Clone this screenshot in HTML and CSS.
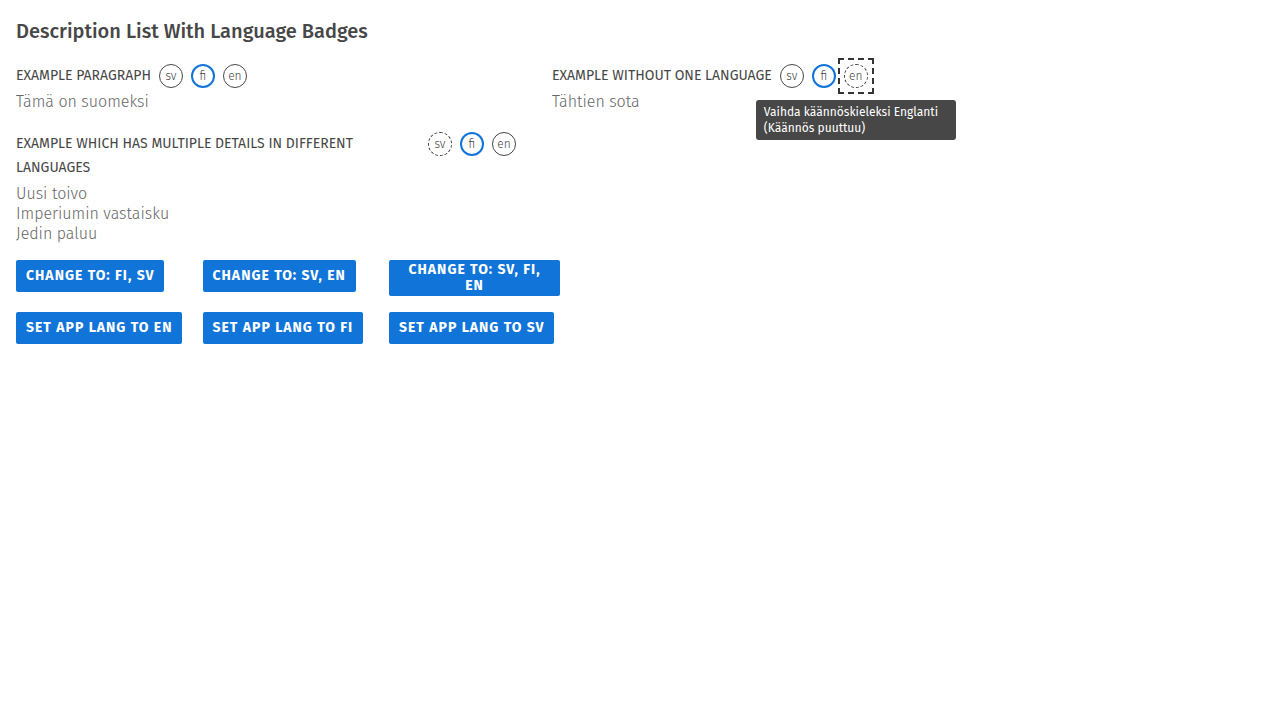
FILE: index.html
```html
<!DOCTYPE html>
<html lang="fi">
<head>
<meta charset="utf-8">
<title>Description List With Language Badges</title>
<link rel="stylesheet" href="styles.css">
</head>
<body>
<main class="page">
  <h1 class="title">Description List With Language Badges</h1>
  <dl class="dlist">
    <div class="item">
      <dt class="term">
        <span class="label">Example paragraph</span>
        <span class="badges">
          <button class="badge">sv</button>
          <button class="badge badge-active">fi</button>
          <button class="badge">en</button>
        </span>
      </dt>
      <dd class="detail">Tämä on suomeksi</dd>
    </div>
    <div class="item">
      <dt class="term">
        <span class="label">Example without one language</span>
        <span class="badges">
          <button class="badge">sv</button>
          <button class="badge badge-active">fi</button>
          <span class="badge-wrap badge-focus">
            <button class="badge badge-missing">en</button>
            <span class="tooltip">Vaihda käännöskieleksi Englanti<br>(Käännös puuttuu)</span>
          </span>
        </span>
      </dt>
      <dd class="detail">Tähtien sota</dd>
    </div>
    <div class="item">
      <dt class="term">
        <span class="label">Example which has multiple details in different languages</span>
        <span class="badges">
          <button class="badge badge-missing">sv</button>
          <button class="badge badge-active">fi</button>
          <button class="badge">en</button>
        </span>
      </dt>
      <dd class="detail">Uusi toivo</dd>
      <dd class="detail">Imperiumin vastaisku</dd>
      <dd class="detail">Jedin paluu</dd>
    </div>
  </dl>
  <div class="actions">
    <div class="cell"><button class="btn">Change to: fi, sv</button></div>
    <div class="cell"><button class="btn">Change to: sv, en</button></div>
    <div class="cell"><button class="btn">Change to: sv, fi, en</button></div>
    <div class="cell"><button class="btn">Set app lang to en</button></div>
    <div class="cell"><button class="btn">Set app lang to fi</button></div>
    <div class="cell"><button class="btn">Set app lang to sv</button></div>
  </div>
</main>
</body>
</html>
```
FILE: styles.css
```css
* { box-sizing: border-box; }
html, body { margin: 0; padding: 0; background: #fff; }
body {
  font-family: "Fira Sans", Roboto, "Noto Sans", sans-serif;
  color: #474747;
}
.page { padding: 16px; }
.title {
  margin: 0;
  font-size: 20px;
  line-height: 30px;
  font-weight: 500;
  color: #474747;
}
.dlist {
  margin: 18px 0 0;
  display: grid;
  grid-template-columns: 500px 500px;
  column-gap: 36px;
  row-gap: 20px;
  align-items: start;
}
.item { min-width: 0; }
.term {
  display: flex;
  align-items: flex-start;
  gap: 8px;
}
.label {
  text-transform: uppercase;
  font-size: 14px;
  line-height: 24px;
  color: #474747;
}
.badges {
  display: flex;
  gap: 8px;
  flex-shrink: 0;
}
.badge-wrap { position: relative; display: flex; }
.badge {
  width: 24px;
  height: 24px;
  padding: 0;
  border-radius: 50%;
  border: 1px solid #474747;
  background: #fff;
  color: #474747;
  font-family: "Fira Sans Light", "Fira Sans", sans-serif;
  font-weight: 300;
  font-size: 12px;
  line-height: 20px;
  display: flex;
  align-items: center;
  justify-content: center;
}
.badge-active { border: 2px solid #1174d9; }
.badge-missing { border: 1px dashed #474747; }
.badge-focus { outline: 2px dashed #333; outline-offset: 4px; }
.tooltip {
  position: absolute;
  left: -88px;
  top: 36px;
  width: 200px;
  padding: 4px 8px;
  background: #474747;
  color: #fff;
  font-size: 12px;
  line-height: 16px;
  border-radius: 3px;
  font-weight: 400;
}
.detail {
  margin: 0;
  font-family: "Fira Sans Light", "Fira Sans", sans-serif;
  font-size: 16px;
  line-height: 20px;
  font-weight: 300;
  color: #666;
}
.term + .detail { margin-top: 4px; }
.actions {
  margin-top: 16px;
  display: grid;
  grid-template-columns: repeat(3, 171px);
  column-gap: 15.5px;
  row-gap: 16px;
  align-items: start;
}
.btn {
  max-width: 100%;
  min-height: 32px;
  padding: 2px 10px;
  background: #1174d9;
  color: #fff;
  border: none;
  border-radius: 2px;
  font-family: inherit;
  font-size: 14px;
  line-height: 16px;
  font-weight: 700;
  letter-spacing: 1px;
  text-transform: uppercase;
}
```
